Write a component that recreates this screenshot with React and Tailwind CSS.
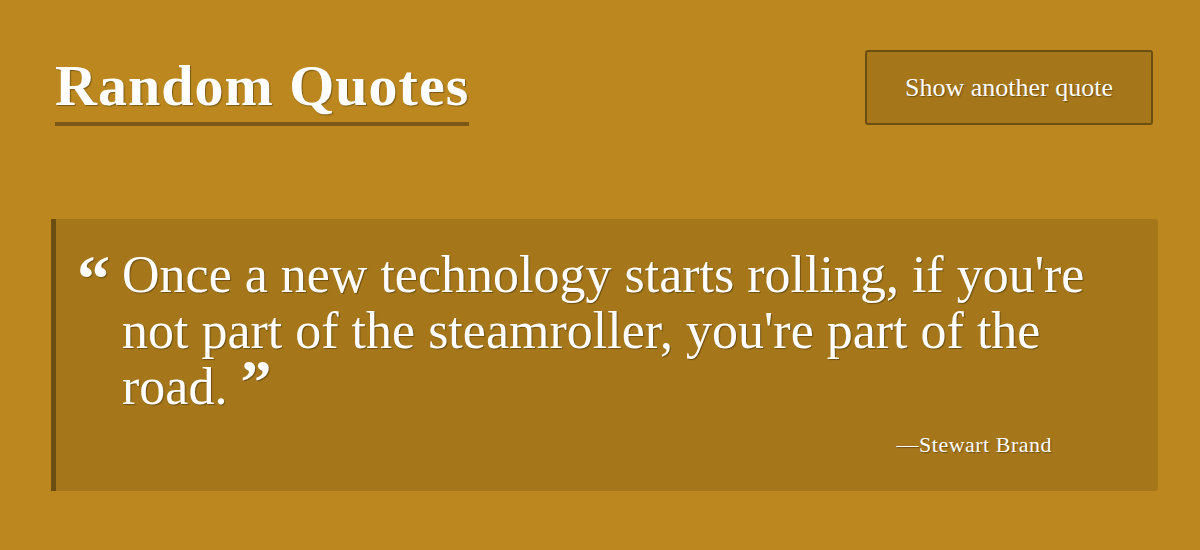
import React from 'react';

const serif = { fontFamily: '"Liberation Serif", "Times New Roman", serif' };

const App = () => {
  return (
    <div className="min-h-[550px] w-full bg-[#bb871e] text-white" style={serif}>
      <div className="px-[51px] pt-[50px]">
        {/* Header */}
        <header className="flex items-start justify-between pl-[4px]">
          <h1 className="mt-[6px] border-b-4 border-[#7a5917] pb-[6px] text-[58px] font-bold leading-[60px] tracking-[1px] [text-shadow:1px_1px_1px_rgba(0,0,0,0.35)]">
            Random Quotes
          </h1>
          <button className="mr-[-4px] h-[75px] w-[288px] rounded-[3px] border-2 border-[#6b4e11] bg-[#a6771a] text-[26px] [text-shadow:1px_1px_1px_rgba(0,0,0,0.35)]">
            Show another quote
          </button>
        </header>

        {/* Quote card */}
        <div className="mt-[93px] w-[1107px] rounded-r-[3px] border-l-[5px] border-[#6b4e11] bg-[#a6771a] pb-[32px] pl-[21px] pr-[60px] pt-[28px]">
          <div className="flex items-start">
            <span className="mr-[12px] text-[66px] font-bold leading-[64px] [text-shadow:1px_1px_1px_rgba(0,0,0,0.35)]">
              “
            </span>
            <p className="text-[52px] leading-[56px] [text-shadow:1px_1px_1px_rgba(0,0,0,0.35)]">
              Once a new technology starts rolling, if you're
              <br />
              not part of the steamroller, you're part of the
              <br />
              road.{' '}
              <span className="relative top-[-2px] text-[62px] font-bold leading-[0]">”</span>
            </p>
          </div>
          <p className="mt-[16px] pr-[46px] text-right text-[22px] leading-[28px] tracking-[0.5px] [text-shadow:1px_1px_1px_rgba(0,0,0,0.35)]">
            —Stewart Brand
          </p>
        </div>
      </div>
    </div>
  );
};

export default App;
